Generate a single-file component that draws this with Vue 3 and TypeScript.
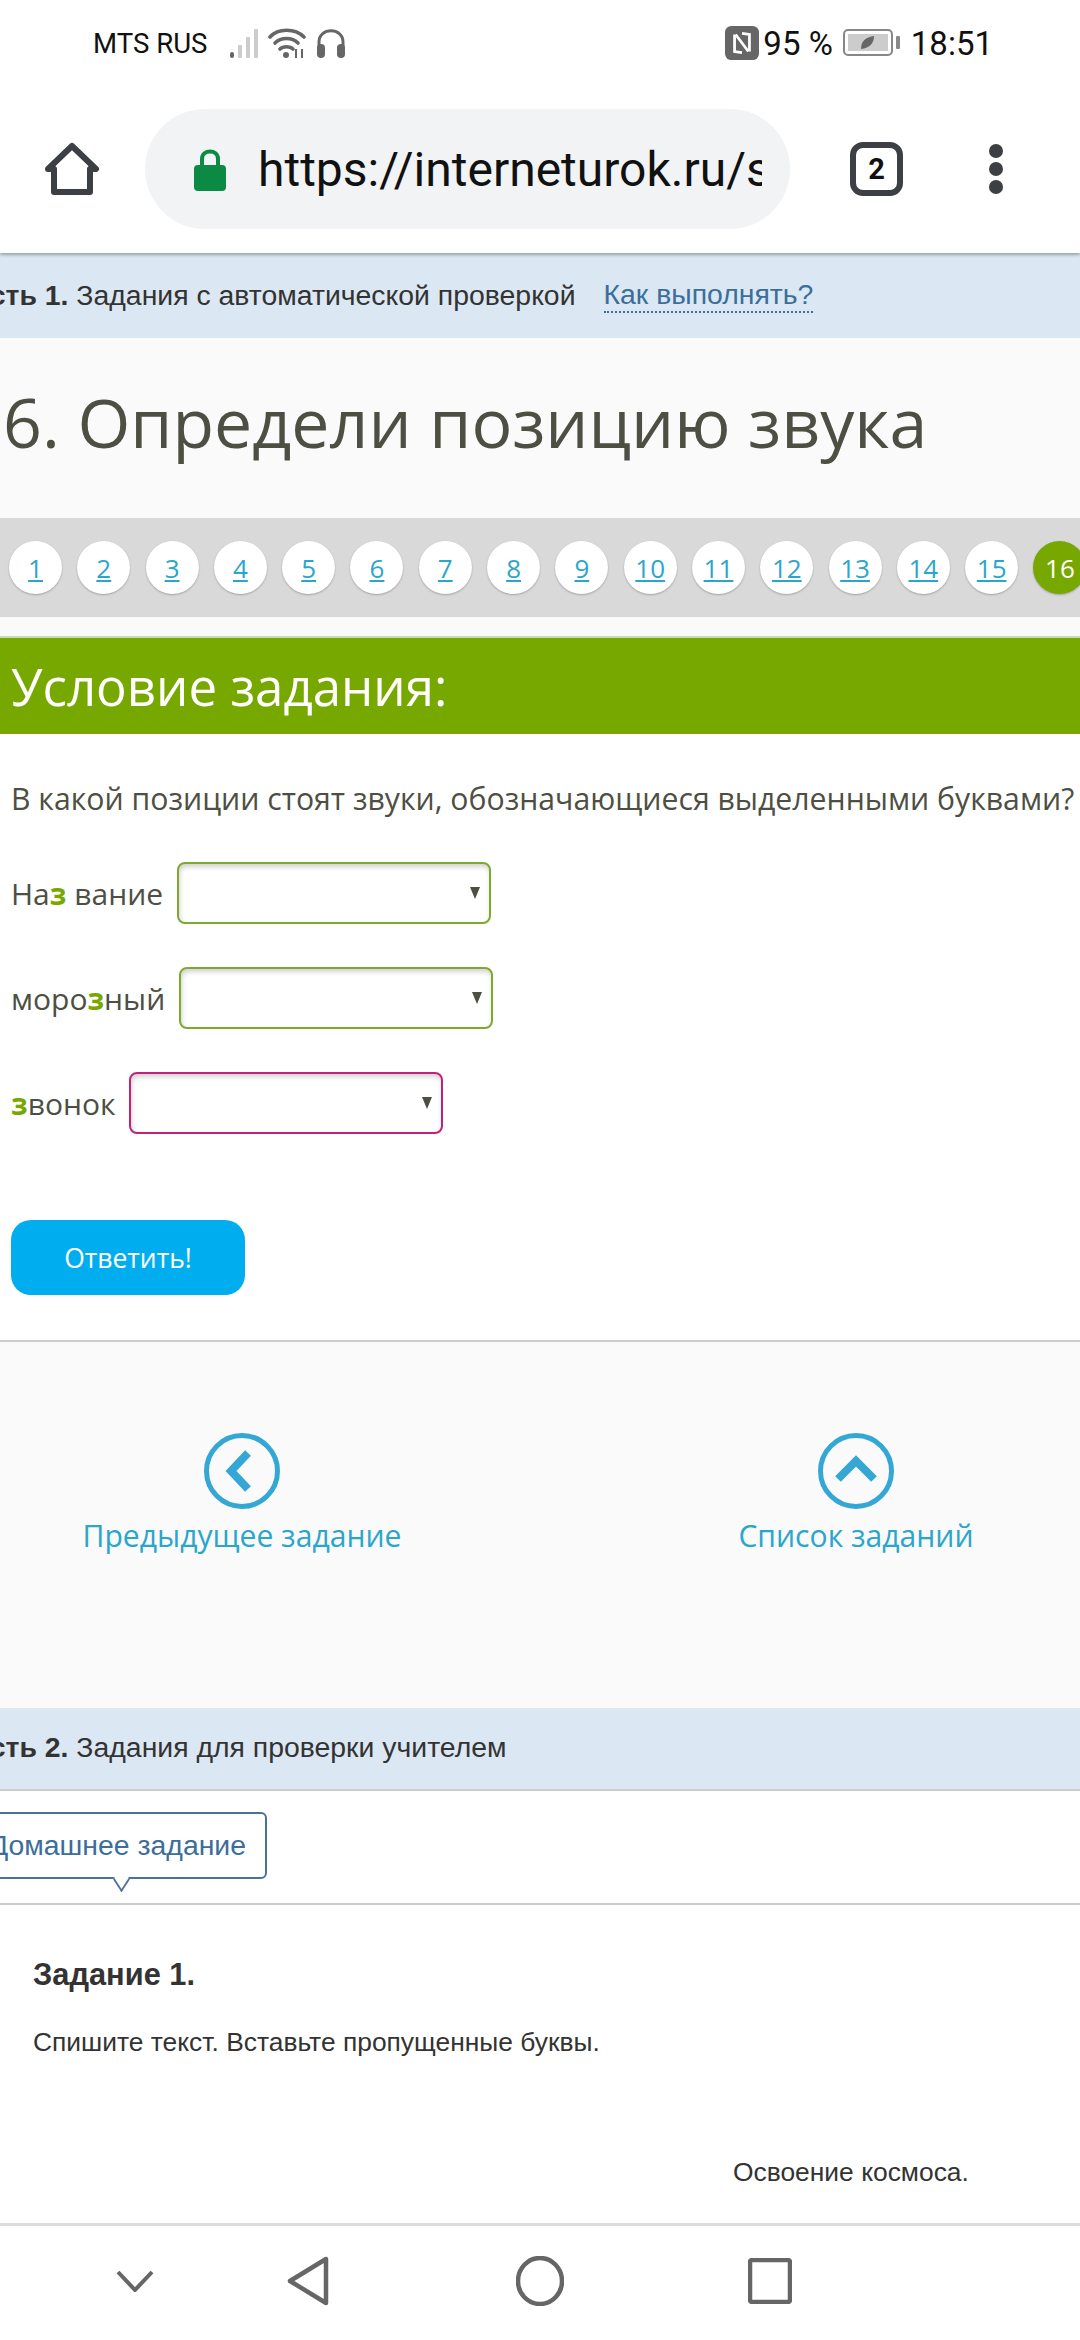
<template>
  <div class="screen">
    <header class="top">
      <div class="status">
        <div class="status-left">
          <span class="carrier">MTS RUS</span>
          <svg class="signal" width="32" height="32" viewBox="0 0 32 32">
            <rect x="1" y="25" width="4" height="6" rx="2" fill="#666" />
            <rect x="9" y="18" width="4" height="13" rx="1" fill="#ccc" />
            <rect x="17" y="10" width="4" height="21" rx="1" fill="#ccc" />
            <rect x="25" y="2" width="4" height="29" rx="1" fill="#ccc" />
          </svg>
          <svg class="wifi" width="38" height="32" viewBox="0 0 38 32">
            <g fill="none" stroke="#666" stroke-width="3.6" stroke-linecap="round">
              <path d="M2 10 C10 1 27 1 36 10" />
              <path d="M7 16 C13 10 24 10 30 16" />
              <path d="M12 22 C15 19 22 19 25 22" />
            </g>
            <circle cx="18" cy="28" r="3" fill="#666" />
            <path d="M28 22v9M34 22v9" stroke="#666" stroke-width="2" />
          </svg>
          <svg class="phones" width="32" height="32" viewBox="0 0 32 32">
            <path d="M4 24 V15 C4 0 28 0 28 15 V24" fill="none" stroke="#666" stroke-width="3" />
            <rect x="2" y="17" width="8" height="14" rx="4" fill="#666" />
            <rect x="22" y="17" width="8" height="14" rx="4" fill="#666" />
          </svg>
        </div>
        <div class="status-right">
          <svg width="34" height="34" viewBox="0 0 32 32">
            <rect x="0" y="0" width="32" height="32" rx="6" fill="#666" />
            <path d="M9 8 V24 L16 25 M23 24 V8 L16 7 M10 8 L22 24" fill="none" stroke="#fff" stroke-width="2.6" />
          </svg>
          <span class="battery-text">95 %</span>
          <svg width="58" height="30" viewBox="0 0 58 30">
            <rect x="1" y="2" width="48" height="25" rx="4" fill="#fff" stroke="#888" stroke-width="2" />
            <rect x="5" y="6" width="40" height="17" fill="#ccc" />
            <path d="M18 21 C18 12 24 9 31 8 C31 15 27 20 18 21Z" fill="#666" />
            <rect x="53" y="8" width="4" height="13" rx="1" fill="#888" />
          </svg>
          <span class="clock">18:51</span>
        </div>
      </div>
      <div class="toolbar">
        <svg class="home" width="56" height="56" viewBox="0 0 56 56">
          <path d="M4 27 L28 4 L52 27 H46 V50 H10 V27Z" fill="none" stroke="#3c3f43" stroke-width="6" stroke-linejoin="round" />
        </svg>
        <div class="url-pill">
          <svg width="32" height="43" viewBox="0 0 32 43">
            <path d="M8 19 V11 C8 1 24 1 24 11 V19" fill="none" stroke="#0b8a43" stroke-width="4" />
            <rect x="0" y="17" width="32" height="26" rx="4" fill="#0b8a43" />
          </svg>
          <div class="url">https://interneturok.ru/s</div>
        </div>
        <div class="tabs">2</div>
        <div class="menu"><i></i><i></i><i></i></div>
      </div>
    </header>

    <div class="part part-one">
      <span class="part-text"><b>Часть 1.</b> Задания с автоматической проверкой</span>
      <a class="how">Как выполнять?</a>
    </div>

    <section class="head">
      <h1>6. Определи позицию звука</h1>
    </section>

    <nav class="pager">
      <a v-for="n in 15" :key="n" class="dot">{{ n }}</a>
      <span class="dot dot-active">16</span>
    </nav>

    <div class="pager-gap"></div>
    <h2 class="band">Условие задания:</h2>

    <section class="task">
      <p class="question">В какой позиции стоят звуки, обозначающиеся выделенными буквами?</p>
      <div v-for="row in rows" :key="row.after" class="row">
        <span>{{ row.before }}<b>з</b>{{ row.after }}</span>
        <div class="pick" :class="row.state"></div>
      </div>
      <button class="answer">Ответить!</button>
    </section>

    <section class="moves">
      <a class="move">
        <svg width="76" height="76" viewBox="0 0 76 76">
          <circle cx="38" cy="38" r="35.5" fill="none" stroke="#35a7d5" stroke-width="5" />
          <path d="M44 20 L27 38 L44 56" fill="none" stroke="#35a7d5" stroke-width="8" />
        </svg>
        <span>Предыдущее задание</span>
      </a>
      <a class="move">
        <svg width="76" height="76" viewBox="0 0 76 76">
          <circle cx="38" cy="38" r="35.5" fill="none" stroke="#35a7d5" stroke-width="5" />
          <path d="M20 46 L38 28 L56 46" fill="none" stroke="#35a7d5" stroke-width="8" />
        </svg>
        <span>Список заданий</span>
      </a>
    </section>

    <div class="part part-two">
      <span class="part-text"><b>Часть 2.</b> Задания для проверки учителем</span>
    </div>

    <div class="tab-line">
      <div class="tab">Домашнее задание</div>
    </div>

    <section class="homework">
      <h3>Задание 1.</h3>
      <p>Спишите текст. Вставьте пропущенные буквы.</p>
      <p class="right">Освоение космоса.</p>
    </section>

    <footer class="nav-bar">
      <svg width="38" height="22" viewBox="0 0 38 22">
        <path d="M2 2 L19 20 L36 2" fill="none" stroke="#666" stroke-width="4" />
      </svg>
      <svg width="42" height="50" viewBox="0 0 42 50">
        <path d="M39 3 V47 L3 25Z" fill="none" stroke="#666" stroke-width="4.5" stroke-linejoin="round" />
      </svg>
      <svg width="48" height="50" viewBox="0 0 48 50">
        <ellipse cx="24" cy="25" rx="22" ry="23" fill="none" stroke="#666" stroke-width="4.5" />
      </svg>
      <svg width="44" height="46" viewBox="0 0 44 46">
        <rect x="2" y="2" width="40" height="42" rx="2" fill="none" stroke="#666" stroke-width="4.5" />
      </svg>
    </footer>
  </div>
</template>

<script setup lang="ts">
const rows = [
  { before: 'На', after: ' вание', state: 'ok' },
  { before: 'моро', after: 'ный', state: 'ok' },
  { before: '', after: 'вонок', state: 'bad' },
]
</script>

<style>
html,
body {
  margin: 0;
  background: #fff;
}
</style>

<style scoped>
.screen {
  width: 1080px;
  height: 2340px;
  overflow: hidden;
  background: #fff;
  font-family: 'Open Sans', 'Noto Sans', sans-serif;
  color: #4d4f43;
}

.top {
  height: 253px;
  position: relative;
  background: #fff;
  box-shadow: 0 2px 3px rgba(0, 0, 0, 0.3);
}

.status {
  height: 86px;
  display: flex;
  justify-content: space-between;
  align-items: center;
  padding: 0 87px 0 93px;
  font-family: Roboto, sans-serif;
  color: #111;
}

.status-left,
.status-right {
  display: flex;
  align-items: center;
}

.carrier {
  font-size: 27.6px;
  margin-right: 22px;
}

.wifi {
  margin-left: 7px;
}

.phones {
  margin-left: 9px;
}

.battery-text {
  font-size: 33px;
  margin: 0 10px 0 4px;
}

.clock {
  font-size: 33px;
  margin-left: 10px;
}

.toolbar {
  display: flex;
  align-items: center;
  padding: 23px 0 24px 44px;
}

.home {
  margin-top: 2px;
}

.url-pill {
  width: 645px;
  height: 120px;
  margin-left: 45px;
  box-sizing: border-box;
  padding: 0 28px 0 49px;
  border-radius: 60px;
  background: #f2f3f5;
  display: flex;
  align-items: center;
  gap: 32px;
}

.url {
  flex: 1;
  overflow: hidden;
  white-space: nowrap;
  font: 48px Roboto, sans-serif;
  color: #111;
}

.tabs {
  width: 53px;
  height: 54px;
  margin-left: 60px;
  box-sizing: border-box;
  border: 6px solid #3c3f43;
  border-radius: 13px;
  display: flex;
  align-items: center;
  justify-content: center;
  font: 700 29px Roboto, sans-serif;
  color: #111;
}

.menu {
  margin-left: 86px;
  display: flex;
  flex-direction: column;
  gap: 4px;
}

.menu i {
  width: 14px;
  height: 14px;
  border-radius: 50%;
  background: #3c3f43;
}

.part {
  background: #dbe8f4;
  display: flex;
  align-items: center;
  white-space: nowrap;
  font-family: 'Liberation Sans', sans-serif;
  font-size: 28.4px;
  color: #333;
}

.part-one {
  height: 85px;
}

.part-two {
  height: 83px;
  box-sizing: border-box;
  padding-bottom: 3px;
  border-bottom: 2px solid #ccc;
}

.part-text {
  margin-left: -46px;
}

.how {
  margin-left: 28px;
  color: #3b6e9a;
  border-bottom: 2px dotted #3b6e9a;
}

.head {
  height: 180px;
  box-sizing: border-box;
  padding-bottom: 14px;
  background: #fafafa;
  display: flex;
  align-items: center;
}

h1 {
  margin: 0 0 0 3px;
  font-size: 68px;
  font-weight: 400;
  white-space: nowrap;
}

.pager {
  height: 99px;
  background: #d9d9d9;
  display: flex;
  align-items: center;
  gap: 15.3px;
  padding-left: 9px;
  overflow: hidden;
}

.dot {
  flex: none;
  width: 53px;
  height: 53px;
  border-radius: 50%;
  background: #fff;
  box-shadow: 0 1px 2px rgba(0, 0, 0, 0.25);
  display: flex;
  align-items: center;
  justify-content: center;
  font-size: 26px;
  color: #2ba6cb;
  text-decoration: underline;
}

.dot-active {
  background: #77a800;
  color: #fff;
  text-decoration: none;
}

.pager-gap {
  height: 21px;
  background: #fafafa;
  border-bottom: 2px solid #c9d9b0;
  box-sizing: border-box;
}

.band {
  height: 96px;
  margin: 0;
  padding-left: 11px;
  background: #77a800;
  display: flex;
  align-items: center;
  font-size: 51px;
  font-weight: 400;
  color: #fff;
}

.task {
  height: 608px;
  box-sizing: border-box;
  padding: 42px 0 0 11px;
  border-bottom: 2px solid #ccc;
}

.question {
  margin: 0 0 41px;
  height: 45px;
  line-height: 45px;
  font-size: 30.2px;
  white-space: nowrap;
}

.row {
  height: 62px;
  margin-bottom: 43px;
  display: flex;
  align-items: center;
  gap: 14px;
  font-size: 30px;
  white-space: pre;
}

.row b {
  color: #77a800;
}

.pick {
  position: relative;
  width: 314px;
  height: 62px;
  box-sizing: border-box;
  border: 2px solid #7fa82e;
  border-radius: 8px;
  background: #fff;
  box-shadow: inset 1px 3px 5px rgba(0, 0, 0, 0.18);
}

.pick.bad {
  border-color: #c2217b;
}

.pick::after {
  content: '';
  position: absolute;
  right: 9px;
  top: 23px;
  border: 5.5px solid transparent;
  border-top: 12px solid #4d4f43;
  border-bottom: 0;
}

.answer {
  display: block;
  width: 234px;
  height: 75px;
  margin-top: 86px;
  border: 0;
  border-radius: 20px;
  background: #00aeef;
  color: #fff;
  font: 26.5px 'Open Sans', sans-serif;
}

.moves {
  height: 366px;
  box-sizing: border-box;
  padding-top: 91px;
  background: #fafafa;
  display: grid;
  grid-template-columns: 484px 448px;
  column-gap: 148px;
  align-items: start;
}

.move {
  display: flex;
  flex-direction: column;
  align-items: center;
  gap: 6px;
  font-size: 30.1px;
  color: #2ba6cb;
}

.tab-line {
  height: 114px;
  box-sizing: border-box;
  padding-top: 21px;
  border-bottom: 2px solid #ccc;
}

.tab {
  position: relative;
  width: 301px;
  height: 67px;
  margin-left: -34px;
  box-sizing: border-box;
  border: 2px solid #4a7299;
  border-radius: 6px;
  display: flex;
  align-items: center;
  justify-content: flex-end;
  padding-right: 19px;
  white-space: nowrap;
  font: 28.4px 'Liberation Sans', sans-serif;
  color: #3b6e9a;
  background: #fff;
}

.tab::after {
  content: '';
  position: absolute;
  left: 146px;
  bottom: -10px;
  width: 15px;
  height: 15px;
  box-sizing: border-box;
  background: #fff;
  border-right: 2px solid #4a7299;
  border-bottom: 2px solid #4a7299;
  transform: rotate(45deg) skew(12deg, 12deg);
}

.homework {
  height: 318px;
  box-sizing: border-box;
  padding: 50px 0 0 33px;
  font-family: 'Liberation Sans', sans-serif;
  color: #333;
  font-size: 26.4px;
}

h3 {
  margin: 0;
  font-size: 30.8px;
  line-height: 40px;
}

.homework p {
  margin: 0;
  line-height: 36px;
  padding-top: 29px;
}

.homework .right {
  padding: 94px 0 0 700px;
}

.nav-bar {
  height: 117px;
  box-sizing: border-box;
  border-top: 3px solid #ddd;
  display: flex;
  align-items: center;
  background: #fff;
  padding: 0 0 4px 116px;
}

.nav-bar svg:nth-child(2) {
  margin-left: 133px;
}

.nav-bar svg:nth-child(3) {
  margin-left: 187px;
}

.nav-bar svg:nth-child(4) {
  margin-left: 184px;
}
</style>
